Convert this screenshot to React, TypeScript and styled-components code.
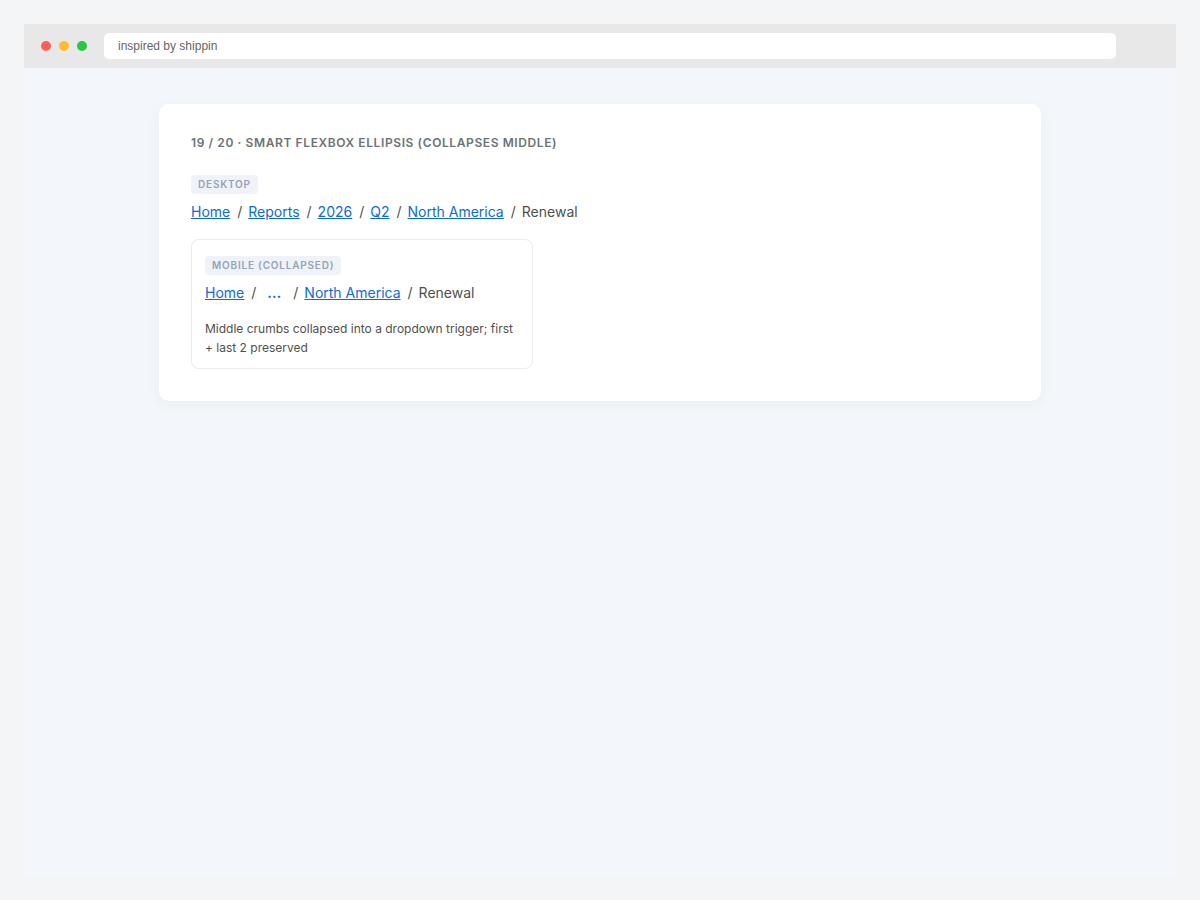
import React from "react";
import styled, { createGlobalStyle } from "styled-components";

const Global = createGlobalStyle`
  * { box-sizing: border-box; }
  body { margin: 0; background: #f4f5f7; color: #4f4f4f; font-family: Inter, "Liberation Sans", sans-serif; }
`;
const Page = styled.div`
  display: flex;
  flex-direction: column;
  min-height: 100vh;
  padding: 24px;
`;
const Toolbar = styled.header`
  display: flex;
  align-items: center;
  gap: 8px;
  height: 44px;
  padding: 0 60px 0 17px;
  background: #e8e8e8;
`;
const Dot = styled.span<{ $color: string }>`
  width: 10px;
  height: 10px;
  border-radius: 50%;
  background: ${(p) => p.$color};
`;
const Address = styled.input`
  flex: 1;
  min-width: 0;
  height: 26px;
  margin-left: 9px;
  padding: 0 14px;
  border: 0;
  border-radius: 5px;
  background: #fff;
  color: #666;
  font: 12px/16px "Liberation Sans", sans-serif;
`;
const Content = styled.main`
  flex: 1;
  padding: 36px;
  background: #f3f6fa;
`;
const Card = styled.section`
  max-width: 882px;
  margin: 0 auto;
  padding: 32px;
  border-radius: 10px;
  background: #fff;
  box-shadow: 0 4px 16px rgba(15, 23, 42, 0.04);
`;
const Title = styled.h1`
  margin: 0 0 25px;
  color: #6b7278;
  font-size: 12px;
  line-height: 14px;
  font-weight: 600;
  letter-spacing: 0.05em;
  text-transform: uppercase;
`;
const Tag = styled.span`
  display: inline-block;
  padding: 3px 7px;
  border-radius: 4px;
  background: #eff3f9;
  color: #94a3b8;
  font-size: 10px;
  line-height: 13px;
  font-weight: 600;
  letter-spacing: 0.08em;
  text-transform: uppercase;
  vertical-align: top;
`;
const Trail = styled.ol`
  display: flex;
  flex-wrap: wrap;
  margin: 6px 0 0;
  padding: 0;
  list-style: none;
  font-size: 14px;
  line-height: 22px;
`;
const Crumb = styled.li`
  display: flex;
  & + &::before {
    content: "/";
    padding: 0 6px 0 7px;
  }
`;
const CrumbLink = styled.a`
  color: #0b6bdc;
  text-decoration: underline;
`;
const More = styled.button`
  padding: 0 5px;
  border: 0;
  background: none;
  color: #0b6bdc;
  font: 700 14px/22px Inter, sans-serif;
`;
const Mobile = styled.div`
  max-width: 342px;
  margin-top: 16px;
  padding: 16px 12px 11px 13px;
  border: 1px solid #e8ebef;
  border-radius: 8px;
`;
const Note = styled.p`
  margin: 15px 0 0;
  font-size: 12px;
  line-height: 19px;
`;

function Breadcrumb({ items, label }: { items: string[]; label: string }) {
  return (
    <nav aria-label={label}>
      <Trail>
        {items.map((item, i) => (
          <Crumb key={item}>
            {item === "…" ? (
              <More type="button" aria-label="Show hidden levels">…</More>
            ) : i < items.length - 1 ? (
              <CrumbLink href="#">{item}</CrumbLink>
            ) : (
              <span aria-current="page">{item}</span>
            )}
          </Crumb>
        ))}
      </Trail>
    </nav>
  );
}

export default function App() {
  return (
    <Page>
      <Global />
      <Toolbar>
        <Dot $color="#ff5f57" />
        <Dot $color="#febc2e" />
        <Dot $color="#28c840" />
        <Address type="text" aria-label="Address" defaultValue="inspired by shippin" />
      </Toolbar>
      <Content>
        <Card>
          <Title>19 / 20 · Smart flexbox ellipsis (collapses middle)</Title>
          <Tag>Desktop</Tag>
          <Breadcrumb label="Desktop breadcrumb" items={["Home", "Reports", "2026", "Q2", "North America", "Renewal"]} />
          <Mobile>
            <Tag>Mobile (collapsed)</Tag>
            <Breadcrumb label="Mobile breadcrumb" items={["Home", "…", "North America", "Renewal"]} />
            <Note>Middle crumbs collapsed into a dropdown trigger; first + last 2 preserved</Note>
          </Mobile>
        </Card>
      </Content>
    </Page>
  );
}
